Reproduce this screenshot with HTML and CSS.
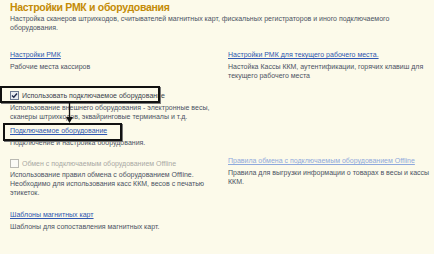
FILE: index.html
```html
<!DOCTYPE html>
<html lang="ru">
  <head>
    <meta charset="UTF-8" />
    <title>Настройки РМК и оборудования</title>
    <link rel="stylesheet" href="styles.css">
  </head>
  <body>
    <div id="page">
      <h1 class="title">Настройки РМК и оборудования</h1>
      <p class="desc">
        Настройка сканеров штрихкодов, считывателей магнитных карт, фискальных регистраторов и иного подключаемого<br>
        оборудования.
      </p>

      <div class="row row-first">
        <div class="cell">
          <a class="link" href="#">Настройки РМК</a>
          <p class="desc">Рабочие места кассиров</p>
        </div>
        <div class="cell">
          <a class="link" href="#">Настройки РМК для текущего рабочего места.</a>
          <p class="desc">Настойка Кассы ККМ, аутентификации, горячих клавиш для<br>текущего рабочего места</p>
        </div>
      </div>

      <div class="row row-equipment">
        <div class="cell equipment">
          <label class="check">
            <span class="box checked">
              <svg width="7" height="7" viewBox="0 0 7 7"><path d="M1 3.5 L2.8 5.3 L6 1.5" fill="none" stroke="#1f2a4a" stroke-width="1.4"/></svg>
            </span>
            Использовать подключаемое оборудование
          </label>
          <p class="desc desc-tight">Использование внешнего оборудования - электронные весы,<br>сканеры штрихкодов, эквайринговые терминалы и т.д.</p>
          <a class="link link-boxed" href="#">Подключаемое оборудование</a>
          <p class="desc">Подключение и настройка оборудования.</p>

          <!-- выделение на скриншоте -->
          <div class="mark mark-check"></div>
          <div class="mark mark-link"></div>
          <svg class="arrow" width="9" height="22" viewBox="0 0 9 22">
            <line x1="4.5" y1="0" x2="4.5" y2="16" stroke="#111" stroke-width="1.3"/>
            <path d="M1 14 L4.5 20 L8 14 Z" fill="#111"/>
          </svg>
        </div>
        <div class="cell"></div>
      </div>

      <div class="row row-offline">
        <div class="cell">
          <label class="check disabled">
            <span class="box"></span>
            Обмен с подключаемым оборудованием Offline
          </label>
          <p class="desc">Использование правил обмена с оборудованием Offline.<br>Необходимо для использования касс ККМ, весов с печатью<br>этикеток.</p>
        </div>
        <div class="cell">
          <a class="link disabled" href="#">Правила обмена с подключаемым оборудованием Offline</a>
          <p class="desc">Правила для выгрузки информации о товарах в весы и кассы<br>ККМ.</p>
        </div>
      </div>

      <div class="row row-cards">
        <div class="cell">
          <a class="link" href="#">Шаблоны магнитных карт</a>
          <p class="desc">Шаблоны для сопоставления магнитных карт.</p>
        </div>
        <div class="cell"></div>
      </div>
    </div>
  </body>
</html>
```

FILE: styles.css
```css
body {
  margin: 0;
  height: 254px;
  overflow: hidden;
  background-color: #fcfaea;
  font-family: "Liberation Sans", Arial, sans-serif;
  color: #4b5263;
}
#page {
  padding: 0 4px 0 10px;
}
.title {
  margin: 0;
  font-size: 10.5px;
  line-height: 14px;
  letter-spacing: -0.3px;
  font-weight: bold;
  color: #c48b05;
}
.desc {
  margin: 0;
  font-size: 7px;
  line-height: 9px;
}
.desc-tight {
  margin-top: 1px;
}
.row {
  display: grid;
  grid-template-columns: 218px 1fr;
}
.row-first {
  margin-top: 18px;
}
.row-equipment {
  margin-top: 8px;
}
.row-offline {
  margin-top: 9px;
}
.row-cards {
  margin-top: 13px;
}
.cell {
  display: flex;
  flex-direction: column;
  align-items: flex-start;
}
.link {
  font-size: 7px;
  line-height: 9px;
  color: #2f56b0;
  text-decoration: underline;
  margin-bottom: 3px;
}
.link.disabled {
  color: #8fa9dc;
}
.link-boxed {
  margin-top: 5px;
  margin-bottom: 3px;
}
.check {
  display: flex;
  align-items: center;
  gap: 3px;
  height: 14px;
  font-size: 7px;
  color: #3a3f4c;
}
.check.disabled {
  color: #a9a9a4;
}
.box {
  width: 7px;
  height: 7px;
  border: 1px solid #b9b9b3;
  background-color: #fafaf6;
  display: flex;
  align-items: center;
  justify-content: center;
}
.box.checked {
  border-color: #6e7b93;
  background-color: #e8ecf2;
}
.equipment {
  position: relative;
}
.mark {
  position: absolute;
  border: 2px solid #111;
  box-shadow: 1px 1px 0 #777;
}
.mark-check {
  left: -10px;
  top: -2px;
  width: 156px;
  height: 13px;
}
.mark-link {
  left: -7px;
  top: 35px;
  width: 115px;
  height: 14px;
}
.arrow {
  position: absolute;
  left: 55px;
  top: 15px;
}
```
